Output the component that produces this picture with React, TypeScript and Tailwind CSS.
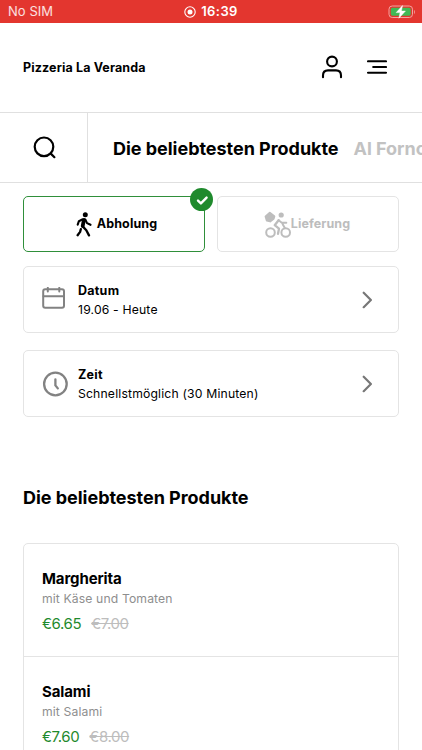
import type { ReactNode } from "react";

type Product = {
  name: string;
  description: string;
  price: string;
  oldPrice: string;
};

const products: Product[] = [
  { name: "Margherita", description: "mit Käse und Tomaten", price: "€6.65", oldPrice: "€7.00" },
  { name: "Salami", description: "mit Salami", price: "€7.60", oldPrice: "€8.00" },
];

export default function App() {
  return (
    <div className="flex h-[750px] w-full flex-col overflow-hidden bg-white font-['Inter','Liberation_Sans',sans-serif] text-black">
      <StatusBar />
      <Header />
      <CategoryNav />

      <main className="px-[23px] pt-[13px]">
        <div className="grid grid-cols-2 gap-3">
          <button className="relative flex h-14 items-center justify-center rounded-[5px] border border-[#2f8f3a] pl-[5px] text-[12.5px] font-bold tracking-[0.12px]">
            <WalkingIcon />
            Abholung
            <span className="absolute -top-[9px] -right-[9px] flex size-[23px] items-center justify-center rounded-full bg-[#1f8a2d]">
              <svg viewBox="0 0 22 22" className="size-[22px]" fill="none" stroke="white" strokeWidth="2.4" strokeLinecap="round" strokeLinejoin="round">
                <path d="M7 11.6 9.9 14.4 15.6 8.6" />
              </svg>
            </span>
          </button>
          <button className="flex h-14 items-center justify-center rounded-[5px] border border-[#e4e4e4] pr-[2px] text-[12.5px] font-bold tracking-[0.1px] text-[#bdbdbd]">
            <CourierIcon />
            Lieferung
          </button>
        </div>

        <OptionRow title="Datum" value="19.06 - Heute" className="mt-[14px]">
          <svg viewBox="0 0 26 26" className="size-[26px]" fill="none" stroke="#828282" strokeWidth="2" strokeLinecap="round">
            <rect x="1.2" y="2.2" width="20.8" height="18.6" rx="2" />
            <path d="M1.5 9.2h20.5M5.8 .8v3.8M17.3 .8v3.8" />
          </svg>
        </OptionRow>
        <OptionRow title="Zeit" value="Schnellstmöglich (30 Minuten)" className="mt-[17px]">
          <svg viewBox="0 0 26 26" className="size-[26px]" fill="none" stroke="#828282" strokeWidth="2.3" strokeLinecap="round" strokeLinejoin="round">
            <circle cx="13.4" cy="13" r="11.3" />
            <path d="M13.4 8.4v6l2.4 3" />
          </svg>
        </OptionRow>

        <h2 className="mt-[69px] text-lg leading-6 font-bold tracking-[-0.03px]">Die beliebtesten Produkte</h2>

        <ul className="mt-[33px] rounded-t-[5px] border border-[#e4e4e4]">
          {products.map((product) => (
            <ProductItem key={product.name} product={product} />
          ))}
        </ul>
      </main>
    </div>
  );
}

function StatusBar() {
  return (
    <div className="grid h-[23px] shrink-0 grid-cols-3 items-center bg-[#e3362f] pr-[6px] pl-2 text-white">
      <span className="pt-px text-[13px] tracking-[0.05px] text-white/85">No SIM</span>
      <span className="-ml-[2px] flex items-center justify-center gap-[5px] pt-px text-[13px] font-semibold tracking-[0.4px]">
        <svg viewBox="0 0 12 12" className="size-3" fill="none" stroke="white" strokeWidth="1.1">
          <circle cx="6" cy="6" r="5.2" />
          <circle cx="6" cy="6" r="2.5" fill="white" stroke="none" />
        </svg>
        16:39
      </span>
      <svg viewBox="0 0 28 14" className="h-[14px] w-7 justify-self-end">
        <rect x="1" y="1" width="23.5" height="11.5" rx="3.2" fill="none" stroke="#f3a39f" />
        <rect x="2.8" y="2.8" width="19.9" height="7.9" rx="1.6" fill="#41b955" />
        <path d="M26 5v4c1.2-.5 1.2-3.5 0-4Z" fill="#f3a39f" />
        <path d="M14.5 .6 8.2 7.6h3.9L10.9 13.2l6.5-7.1h-4Z" fill="white" stroke="white" strokeWidth="0.5" />
      </svg>
    </div>
  );
}

function Header() {
  return (
    <header className="flex h-[90px] shrink-0 items-center justify-between border-b border-[#e0e0e0] pr-[35px] pl-[23px]">
      <h1 className="pt-px text-[12.5px] font-bold tracking-[0.13px]">Pizzeria La Veranda</h1>
      <div className="flex items-center gap-[24px] pb-px">
        <svg viewBox="0 0 22 24" className="h-6 w-[22px]" fill="none" stroke="black" strokeWidth="2.1" strokeLinecap="round">
          <circle cx="11" cy="6.5" r="4.9" />
          <path d="M2 22.3v-1.8c0-3.1 2-5.1 5-5.1h8c3 0 5 2 5 5.1v1.8" />
        </svg>
        <svg viewBox="0 0 20 14" className="h-[14px] w-5" stroke="black" strokeWidth="2.1" strokeLinecap="round">
          <path d="M1 1.3h18M6.2 7h12.8M1 12.7h18" />
        </svg>
      </div>
    </header>
  );
}

function CategoryNav() {
  return (
    <nav className="flex h-[70px] shrink-0 border-b border-[#e0e0e0]">
      <button className="flex w-[88px] shrink-0 items-center justify-center border-r border-[#e0e0e0]">
        <svg viewBox="0 0 24 24" className="size-6" fill="none" stroke="black" strokeWidth="2.2" strokeLinecap="round">
          <circle cx="12" cy="10.8" r="9.3" />
          <path d="m18.8 17.6 3.6 3.6" />
        </svg>
      </button>
      <div className="flex items-center gap-[15px] overflow-hidden pt-[2px] pl-[25px] text-lg font-bold tracking-[-0.03px] whitespace-nowrap">
        <span>Die beliebtesten Produkte</span>
        <span className="text-[#c2c2c2]">Al Forno</span>
      </div>
    </nav>
  );
}

function OptionRow({ title, value, className, children }: { title: string; value: string; className: string; children: ReactNode }) {
  return (
    <button className={`flex h-[67px] w-full items-center rounded-[5px] border border-[#e4e4e4] pl-[18px] text-left ${className}`}>
      {children}
      <span className="ml-[10px] flex flex-1 flex-col leading-[19px]">
        <span className="text-[12.5px] font-bold tracking-[0.25px]">{title}</span>
        <span className="text-[12.2px] tracking-[0.17px]">{value}</span>
      </span>
      <svg viewBox="0 0 10 18" className="mr-[26px] h-[18px] w-[10px]" fill="none" stroke="#777777" strokeWidth="2.2" strokeLinecap="round" strokeLinejoin="round">
        <path d="m1.7 1.7 7.2 7.3-7.2 7.2" />
      </svg>
    </button>
  );
}

function ProductItem({ product }: { product: Product }) {
  return (
    <li className="h-[113px] border-b border-[#e4e4e4] px-[18px] pt-[25px]">
      <h3 className="text-[15px] leading-5 font-bold tracking-[-0.12px]">{product.name}</h3>
      <p className="text-[12.2px] leading-5 tracking-[0.12px] text-[#8e8e8e]">{product.description}</p>
      <p className="mt-[5px] flex gap-[10px] text-[15px] leading-5 tracking-[-0.4px]">
        <span className="text-[#1f8a2d]">{product.price}</span>
        <s className="text-[#bdbdbd]">{product.oldPrice}</s>
      </p>
    </li>
  );
}

function WalkingIcon() {
  return (
    <svg viewBox="0 0 16 25" className="mr-[5px] h-[25px] w-4" fill="none" stroke="currentColor" strokeWidth="2.1" strokeLinecap="round" strokeLinejoin="round">
      <circle cx="9.3" cy="2.7" r="2.5" fill="currentColor" stroke="none" />
      <path d="M6.3 7.4 2.9 9.2 1.7 12.7M9.3 7.5l1.7 3.6 3.5 1.7" />
      <path d="M7.9 7.9 6.7 14" strokeWidth="3.8" />
      <path d="m6.7 14.4 3.6 3.8 2.7 5.2M4.8 17.2l-.7 2.7-2.5 3.3" strokeWidth="2.3" />
    </svg>
  );
}

// Cyclist with a delivery box on the back
function CourierIcon() {
  return (
    <svg viewBox="0 0 27 27" className="size-[27px]" fill="none" stroke="currentColor" strokeWidth="2" strokeLinecap="round" strokeLinejoin="round">
      <path d="m1.6 5.4 4.2-3.6 4.5 3.6-.6 2.2-3.600 2.800-3.300-.8Z" fill="currentColor" />
      <circle cx="17.2" cy="4" r="2.6" fill="currentColor" stroke="none" />
      <circle cx="6.5" cy="21.5" r="4.3" />
      <circle cx="21.7" cy="21.5" r="4.3" />
      <path d="m14.6 9.2-3.9 5 4.3 3.4-1 5.2" strokeWidth="2.3" />
      <path d="m14.6 9.2 3.2 2.5h4.5M18.7 13.2l2 3.5" />
    </svg>
  );
}
